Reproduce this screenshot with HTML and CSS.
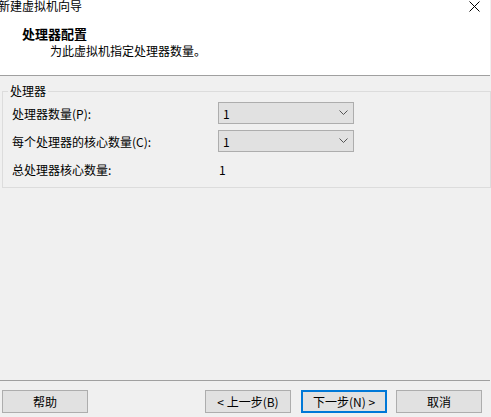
FILE: index.html
```html
<!DOCTYPE html>
<html lang="zh-CN">
<head>
<meta charset="utf-8">
<title>新建虚拟机向导</title>
<link rel="stylesheet" href="styles.css">
</head>
<body>
<div class="window">
  <div class="header">
    <div class="titlebar">
      <span class="title">新建虚拟机向导</span>
      <svg class="close" width="11" height="11" viewBox="0 0 11 11"><path d="M0.5 0.5 L10.5 10.5 M10.5 0.5 L0.5 10.5" stroke="#000" stroke-width="1" fill="none"/></svg>
    </div>
    <div class="heading">处理器配置</div>
    <div class="subtitle">为此虚拟机指定处理器数量。</div>
  </div>
  <div class="content">
    <div class="group">
      <span class="legend">处理器</span>
      <div class="row">
        <span class="label">处理器数量(P):</span>
        <div class="select"><span>1</span><svg width="9" height="6" viewBox="0 0 9 6"><path d="M0.5 0.5 L4.5 4.5 L8.5 0.5" stroke="#555" stroke-width="1" fill="none"/></svg></div>
      </div>
      <div class="row">
        <span class="label">每个处理器的核心数量(C):</span>
        <div class="select"><span>1</span><svg width="9" height="6" viewBox="0 0 9 6"><path d="M0.5 0.5 L4.5 4.5 L8.5 0.5" stroke="#555" stroke-width="1" fill="none"/></svg></div>
      </div>
      <div class="row">
        <span class="label">总处理器核心数量:</span>
        <span class="value">1</span>
      </div>
    </div>
  </div>
  <div class="footer">
    <button class="btn help">帮助</button>
    <div class="spacer"></div>
    <button class="btn">&lt; 上一步(B)</button>
    <button class="btn default">下一步(N) &gt;</button>
    <button class="btn">取消</button>
  </div>
</div>
</body>
</html>
```
FILE: styles.css
```css
html, body {
  margin: 0;
  padding: 0;
}
body {
  width: 491px;
  height: 417px;
  overflow: hidden;
  background: #f0f0f0;
  font-family: "Noto Sans CJK SC", "Noto Sans", sans-serif;
  font-size: 12px;
  color: #000;
}
.window {
  display: flex;
  flex-direction: column;
  height: 417px;
}
.header {
  height: 75px;
  background: #fff;
  border-bottom: 1px solid #a0a0a0;
  width: 490px;
  flex: none;
}
.titlebar {
  display: flex;
  align-items: flex-start;
  height: 20px;
}
.title {
  margin-left: -2px;
  margin-top: -3px;
  line-height: 17px;
}
.close {
  margin-left: auto;
  margin-right: 10px;
  margin-top: 1px;
}
.heading {
  margin-left: 22px;
  margin-top: 5px;
  font-weight: bold;
  font-size: 13px;
  line-height: 17px;
}
.subtitle {
  margin-left: 50px;
  line-height: 17px;
}
.content {
  flex: 1;
  padding-top: 15px;
}
.group {
  position: relative;
  margin-left: 2px;
  width: 478px;
  border: 1px solid #dcdcdc;
  padding: 10px 0 7px 9px;
  display: flex;
  flex-direction: column;
  gap: 6px;
}
.legend {
  position: absolute;
  left: 5px;
  top: -9px;
  padding: 0 2px;
  background: #f0f0f0;
  line-height: 16px;
}
.row {
  display: flex;
  align-items: center;
  height: 22px;
}
.label {
  width: 206px;
  flex: none;
}
.select {
  width: 134px;
  height: 20px;
  border: 1px solid #adadad;
  background: #e1e1e1;
  display: flex;
  align-items: center;
  justify-content: space-between;
  padding: 0 5px 0 4px;
  box-sizing: border-box;
  width: 136px;
  height: 22px;
}
.value {
  padding-left: 1px;
}
.footer {
  height: 36px;
  width: 490px;
  border-top: 1px solid #a0a0a0;
  display: flex;
  align-items: flex-start;
  padding-top: 9px;
  box-sizing: border-box;
  height: 37px;
  flex: none;
}
.spacer {
  flex: 1;
}
.btn {
  width: 86px;
  height: 23px;
  box-sizing: border-box;
  border: 1px solid #adadad;
  background: #e1e1e1;
  font-family: inherit;
  font-size: 12px;
  color: #000;
  padding: 0;
  margin: 0;
}
.help {
  margin-left: 2px;
}
.btn + .btn {
  margin-left: 10px;
}
.btn.default {
  border: 2px solid #0078d7;
}
.btn.default + .btn {
  margin-left: 9px;
  margin-right: 8px;
}
```
